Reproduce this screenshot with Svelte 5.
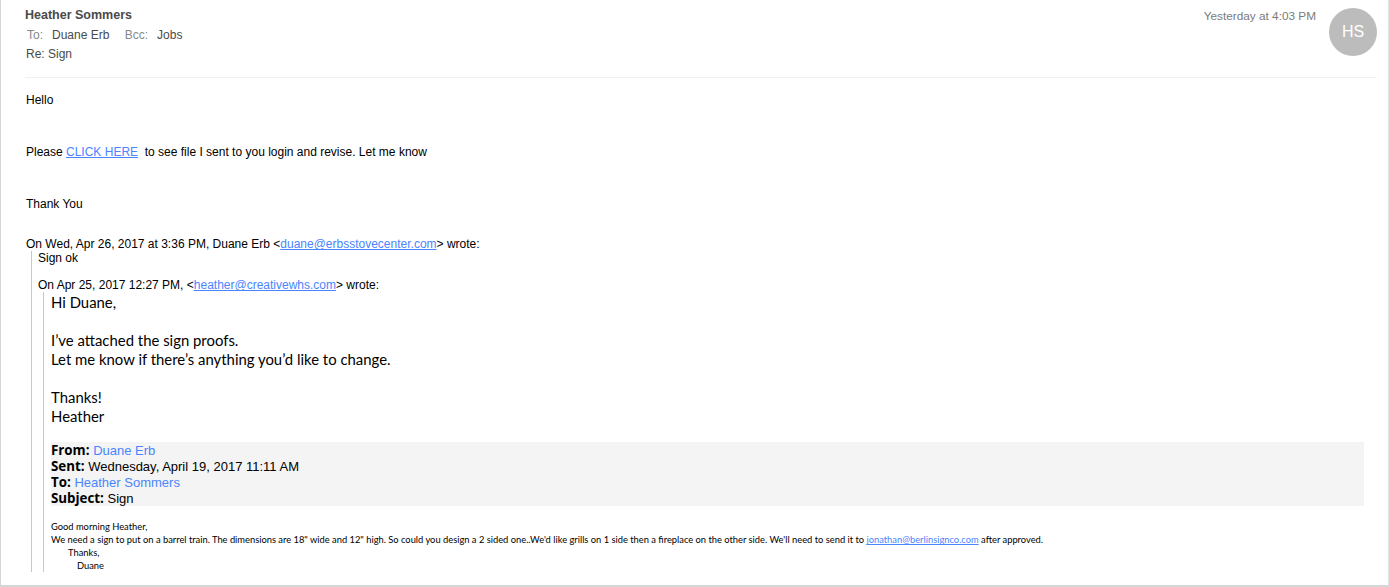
<script>
  const meta = [
    { label: "From:", value: "Duane Erb", link: true },
    { label: "Sent:", value: "Wednesday, April 19, 2017 11:11 AM" },
    { label: "To:", value: "Heather Sommers", link: true },
    { label: "Subject:", value: "Sign" },
  ];
</script>

<div class="page">
  <header class="head">
    <div class="who">
      <div class="sender">Heather Sommers</div>
      <div class="rcpt">
        <span class="lbl">To:</span><span class="name">Duane Erb</span>
        <span class="lbl bcc">Bcc:</span><span class="name">Jobs</span>
      </div>
      <div class="subj">Re: Sign</div>
    </div>
    <div class="time">Yesterday at 4:03 PM</div>
    <div class="avatar">HS</div>
  </header>

  <main class="body">
    <p class="line">Hello</p>
    <p class="line gap">Please <a href="#top">CLICK HERE</a>&nbsp; to see file I sent to you login and revise. Let me know</p>
    <p class="line gap">Thank You</p>

    <div class="attr first">On Wed, Apr 26, 2017 at 3:36 PM, Duane Erb &lt;<a href="#top">duane@erbsstovecenter.com</a>&gt; wrote:</div>
    <blockquote class="outer">
      <div class="ok">Sign ok</div>
      <div class="attr second">On Apr 25, 2017 12:27 PM, &lt;<a href="#top">heather@creativewhs.com</a>&gt; wrote:</div>
      <blockquote class="inner">
        <div class="msg">
          <div>Hi Duane,</div>
          <div class="blank"></div>
          <div>I’ve attached the sign proofs.</div>
          <div>Let me know if there’s anything you’d like to change.</div>
          <div class="blank"></div>
          <div>Thanks!</div>
          <div>Heather</div>
        </div>

        <div class="meta">
          {#each meta as row}
            <div class="row"><b>{row.label}</b> {#if row.link}<span class="blue">{row.value}</span>{:else}{row.value}{/if}</div>
          {/each}
        </div>

        <div class="small">
          <div>Good morning Heather,</div>
          <div>We need a sign to put on a barrel train. The dimensions are 18" wide and 12" high. So could you design a 2 sided one..We'd like grills on 1 side then a fireplace on the other side. We'll need to send it to <a href="#top">jonathan@berlinsignco.com</a> after approved.</div>
          <div class="thx">Thanks,</div>
          <div class="sig">Duane</div>
        </div>
      </blockquote>
    </blockquote>
  </main>
</div>

<style>
  :global(body) {
    margin: 0;
    background: #fff;
  }

  .page {
    box-sizing: border-box;
    width: 1389px;
    height: 587px;
    overflow: hidden;
    border-left: 1px solid #d6d6d6;
    border-right: 1px solid #e4e4e4;
    border-bottom: 2px solid #d6d6d6;
    font-family: "Liberation Sans", Arial, sans-serif;
    font-size: 12px;
    color: #000;
    background: #fff;
  }

  a {
    color: #4a84ff;
    text-decoration: underline;
  }

  .head {
    display: flex;
    align-items: flex-start;
    height: 77px;
    margin: 0 11px 0 24px;
    border-bottom: 1px solid #f0f0f0;
  }

  .who {
    flex: 1;
    padding-top: 6px;
    padding-left: 1px;
    line-height: 20px;
    color: #4a4a4a;
  }

  .sender {
    font-size: 12.5px;
    font-weight: 700;
    line-height: 19px;
    margin-left: -1px;
  }

  .rcpt {
    margin-left: 1px;
  }

  .subj {
    line-height: 19px;
  }

  .lbl {
    color: #85898d;
    margin-right: 9px;
  }

  .bcc {
    margin-left: 12px;
  }

  .time {
    margin-top: 9px;
    margin-right: 13px;
    line-height: 14px;
    font-size: 11.8px;
    color: #7a7a7a;
  }

  .avatar {
    width: 48px;
    height: 48px;
    margin-top: 8px;
    border-radius: 50%;
    background: #bcbcbc;
    color: #fff;
    font-size: 16px;
    line-height: 48px;
    text-align: center;
  }

  .body {
    padding: 14px 0 0 25px;
  }

  .line {
    margin: 0;
    line-height: 17.33px;
  }

  .gap {
    margin-top: 34.67px;
  }

  .attr {
    line-height: 14px;
  }

  .first {
    margin-top: 24px;
  }

  blockquote {
    margin: 0;
    border-left: 1px solid #c8c8c8;
  }

  .outer {
    margin-left: 5px;
    padding-left: 6px;
  }

  .ok {
    line-height: 14px;
  }

  .second {
    margin-top: 13px;
  }

  .inner {
    margin-left: 5px;
    padding-left: 7px;
    padding-top: 1px;
  }

  .msg {
    font-family: Lato, "Open Sans", sans-serif;
    font-size: 14.9px;
    line-height: 19px;
  }

  .blank {
    height: 19px;
  }

  .meta {
    box-sizing: border-box;
    margin: 16px 24px 0 0;
    padding-top: 1px;
    height: 64px;
    background: #f4f4f4;
    font-size: 13px;
  }

  .row {
    height: 16px;
    line-height: 16px;
  }

  .meta b {
    font-family: "Open Sans", sans-serif;
    font-size: 13.33px;
    line-height: 1;
  }

  .blue {
    color: #4a84ff;
  }

  .small {
    margin-top: 14px;
    font-family: Lato, "Open Sans", sans-serif;
    font-size: 9.33px;
    line-height: 13px;
  }

  .thx {
    padding-left: 17px;
  }

  .sig {
    padding-left: 26px;
  }
</style>
